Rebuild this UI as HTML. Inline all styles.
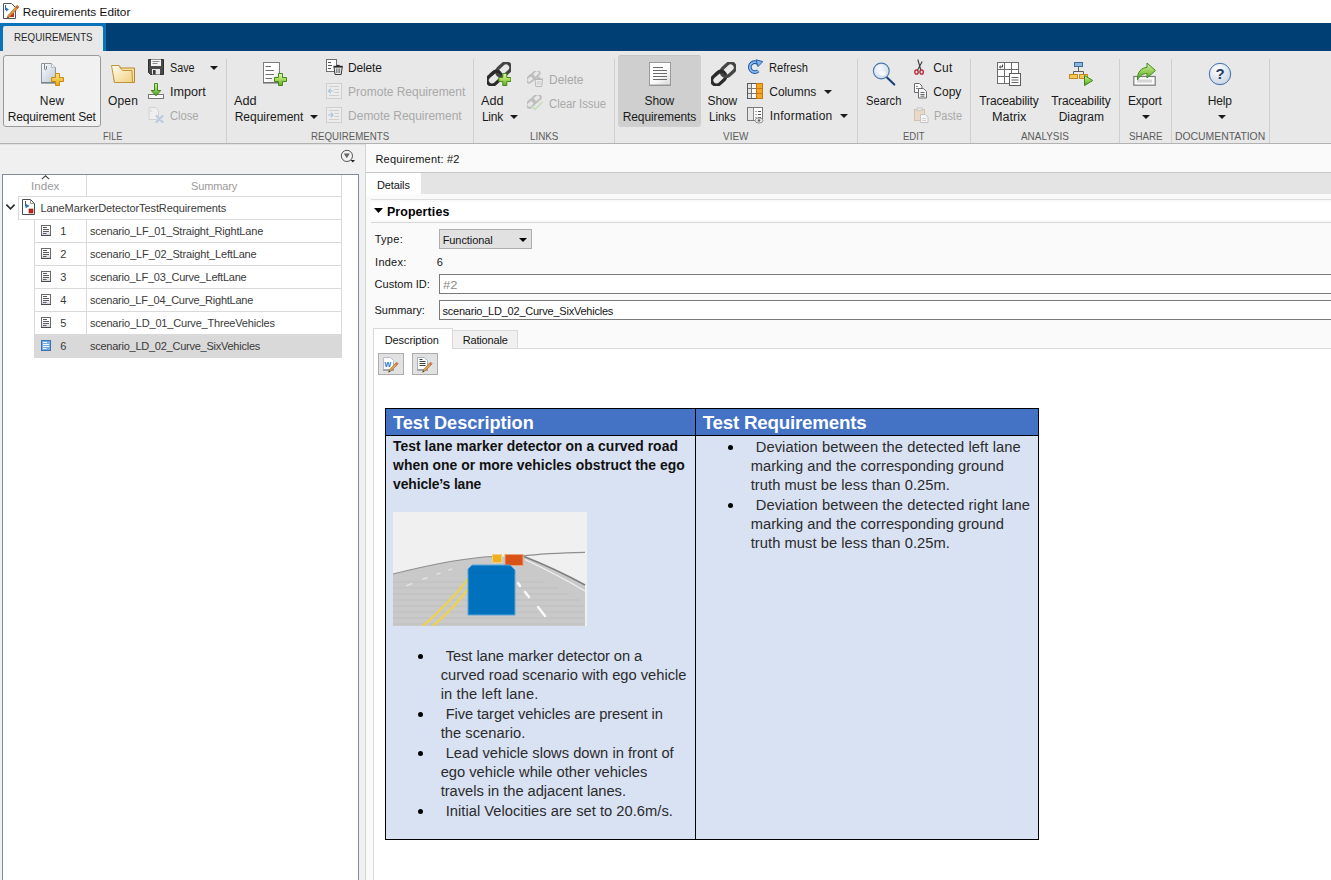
<!DOCTYPE html>
<html lang="en"><head><meta charset="utf-8"><title>Requirements Editor</title>
<style>
html,body{margin:0;padding:0}
body{width:1331px;height:880px;overflow:hidden;position:relative;background:#f0f0f0;font-family:'Liberation Sans', sans-serif;}
.b{position:absolute;box-sizing:border-box;display:block}
.t{position:absolute;white-space:pre;line-height:20px;transform-origin:0 50%;font-family:'Liberation Sans', sans-serif;}
</style></head>
<body>
<div class="b" style="left:0px;top:0px;width:1331px;height:23px;background:#ffffff;"></div>
<div class="b" style="left:0px;top:23px;width:1331px;height:28px;background:#003f73;"></div>
<div class="b" style="left:0px;top:23px;width:106px;height:28px;background:#0a72bb;"></div>
<div class="b" style="left:3px;top:26px;width:100px;height:25px;background:#e8e8e8;border-radius:2px 2px 0 0;"></div>
<div class="b" style="left:0px;top:51px;width:1331px;height:92px;background:#e8e8e8;"></div>
<div class="b" style="left:0px;top:143px;width:1331px;height:1px;background:#b2b2b2;"></div>
<div class="b" style="left:0px;top:144px;width:1331px;height:1px;background:#e0e0e0;"></div>
<div class="b" style="left:226px;top:59px;width:1px;height:84px;background:#cfcfcf;"></div>
<div class="b" style="left:473px;top:59px;width:1px;height:84px;background:#cfcfcf;"></div>
<div class="b" style="left:614px;top:59px;width:1px;height:84px;background:#cfcfcf;"></div>
<div class="b" style="left:857px;top:59px;width:1px;height:84px;background:#cfcfcf;"></div>
<div class="b" style="left:970px;top:59px;width:1px;height:84px;background:#cfcfcf;"></div>
<div class="b" style="left:1119px;top:59px;width:1px;height:84px;background:#cfcfcf;"></div>
<div class="b" style="left:1171px;top:59px;width:1px;height:84px;background:#cfcfcf;"></div>
<div class="b" style="left:1269px;top:59px;width:1px;height:84px;background:#cfcfcf;"></div>
<div class="b" style="left:3px;top:55px;width:98px;height:72px;background:#f1f1f1;border:1px solid #9a9a9a;border-radius:3px;"></div>
<div class="b" style="left:618px;top:55px;width:83px;height:72px;background:#cfcfcf;border-radius:3px;border-top:1px solid #c4c4c4;"></div>
<div class="b" style="left:0px;top:145px;width:365px;height:735px;background:#f0f0f0;"></div>
<div class="b" style="left:2px;top:174px;width:357px;height:720px;background:#ffffff;border:1px solid #828b99;"></div>
<div class="b" style="left:18px;top:196px;width:324px;height:1px;background:#dadada;"></div>
<div class="b" style="left:18px;top:219px;width:324px;height:1px;background:#dadada;"></div>
<div class="b" style="left:34px;top:242px;width:308px;height:1px;background:#dadada;"></div>
<div class="b" style="left:34px;top:265px;width:308px;height:1px;background:#dadada;"></div>
<div class="b" style="left:34px;top:288px;width:308px;height:1px;background:#dadada;"></div>
<div class="b" style="left:34px;top:311px;width:308px;height:1px;background:#dadada;"></div>
<div class="b" style="left:34px;top:334px;width:308px;height:1px;background:#dadada;"></div>
<div class="b" style="left:86px;top:175px;width:1px;height:21px;background:#dadada;"></div>
<div class="b" style="left:86px;top:220px;width:1px;height:114px;background:#dadada;"></div>
<div class="b" style="left:341px;top:175px;width:1px;height:159px;background:#dadada;"></div>
<div class="b" style="left:18px;top:197px;width:1px;height:22px;background:#dadada;"></div>
<div class="b" style="left:34px;top:220px;width:1px;height:114px;background:#dadada;"></div>
<div class="b" style="left:34px;top:334px;width:308px;height:24px;background:#d9d9d9;"></div>
<div class="b" style="left:365px;top:144px;width:966px;height:736px;background:#fafafa;"></div>
<div class="b" style="left:365px;top:144px;width:1px;height:736px;background:#d4d4d4;"></div>
<div class="b" style="left:366px;top:172px;width:965px;height:1px;background:#c6c6c6;"></div>
<div class="b" style="left:366px;top:173px;width:965px;height:21px;background:#e4e4e4;"></div>
<div class="b" style="left:366px;top:173px;width:55px;height:22px;background:#ffffff;"></div>
<div class="b" style="left:371px;top:199px;width:960px;height:1px;background:#dcdcdc;"></div>
<div class="b" style="left:371px;top:202px;width:960px;height:18px;background:#ffffff;"></div>
<div class="b" style="left:371px;top:222px;width:960px;height:1px;background:#d6d6d6;"></div>
<div class="b" style="left:439px;top:229px;width:93px;height:20px;background:#e1e1e1;border:1px solid #adadad;"></div>
<div class="b" style="left:439px;top:274px;width:900px;height:20px;background:#ffffff;border:1px solid #7a7a7a;"></div>
<div class="b" style="left:439px;top:300px;width:900px;height:20px;background:#ffffff;border:1px solid #7a7a7a;"></div>
<div class="b" style="left:373px;top:348px;width:960px;height:540px;background:#ffffff;border:1px solid #d9d9d9;"></div>
<div class="b" style="left:452px;top:330px;width:66px;height:19px;background:#f0f0f0;border:1px solid #d9d9d9;"></div>
<div class="b" style="left:373px;top:328px;width:80px;height:21px;background:#ffffff;border:1px solid #d9d9d9;border-bottom:none;"></div>
<div class="b" style="left:378px;top:353px;width:26px;height:22px;background:#e1e1e1;border:1px solid #adadad;"></div>
<div class="b" style="left:412px;top:353px;width:26px;height:22px;background:#e1e1e1;border:1px solid #adadad;"></div>
<div class="b" style="left:385px;top:408px;width:654px;height:432px;background:#d9e2f3;border:1px solid #000;"></div>
<div class="b" style="left:386px;top:409px;width:652px;height:26px;background:#4472c4;"></div>
<div class="b" style="left:386px;top:435px;width:652px;height:1px;background:#000;"></div>
<div class="b" style="left:695px;top:409px;width:1px;height:430px;background:#000;"></div>
<svg class="b" width="0" height="0" style="left:0;top:0"><defs>
<linearGradient id="gDoc" x1="0" y1="0" x2="1" y2="1"><stop offset="0" stop-color="#fdfdfe"/><stop offset="1" stop-color="#b9c6d6"/></linearGradient>
<linearGradient id="gPaper" x1="0" y1="0" x2="1" y2="1"><stop offset="0.5" stop-color="#ffffff"/><stop offset="1" stop-color="#d8d8d8"/></linearGradient>
<linearGradient id="gPlusY" x1="0" y1="0" x2="0" y2="1"><stop offset="0" stop-color="#ffe680"/><stop offset="1" stop-color="#e9a60d"/></linearGradient>
<linearGradient id="gPlusG" x1="0" y1="0" x2="0" y2="1"><stop offset="0" stop-color="#e6f6b4"/><stop offset="0.5" stop-color="#a9d85a"/><stop offset="1" stop-color="#62ab22"/></linearGradient>
<linearGradient id="gFold" x1="0" y1="0" x2="1" y2="1"><stop offset="0" stop-color="#fffdf2"/><stop offset="1" stop-color="#f1cf7c"/></linearGradient>
<linearGradient id="gGreen" x1="0" y1="0" x2="0" y2="1"><stop offset="0" stop-color="#d3eea2"/><stop offset="0.55" stop-color="#8fcb4e"/><stop offset="1" stop-color="#429c1d"/></linearGradient>
<linearGradient id="gBlue" x1="0" y1="0" x2="0" y2="1"><stop offset="0" stop-color="#8fc0ee"/><stop offset="1" stop-color="#1d5fb0"/></linearGradient>
<radialGradient id="gHelp" cx="0.4" cy="0.3" r="0.8"><stop offset="0" stop-color="#ffffff"/><stop offset="1" stop-color="#c3cfdf"/></radialGradient>
<radialGradient id="gLens" cx="0.4" cy="0.35" r="0.8"><stop offset="0" stop-color="#f6f9fc"/><stop offset="1" stop-color="#c8d6e6"/></radialGradient>
<linearGradient id="gRow" x1="0" y1="0" x2="0" y2="1"><stop offset="0.4" stop-color="#ffffff"/><stop offset="1" stop-color="#cfd6de"/></linearGradient>
</defs></svg>
<svg class="b" style="left:2px;top:2px" width="18" height="18" viewBox="0 0 18 18"><path d="M1.5 1.5H9.5L13.5 5.5V16.5H1.5Z" fill="#fff" stroke="#555" stroke-width="1"/>
<path d="M3.5 3V8" stroke="#1f66b5" stroke-width="1"/><path d="M4 5.5L7 7.5L4 9.5Z" fill="#2a7ad0"/>
<rect x="8" y="11" width="4" height="4" fill="#c8321e"/>
<path d="M15.2 3.2L17 5L7.5 15L5.2 16.2L6 13.5Z" fill="#e79a3c" stroke="#8a5a20" stroke-width="0.6"/>
<path d="M14 4.4L15.8 6.2" stroke="#c0504d" stroke-width="1.4"/><path d="M5.2 16.2L6 14.6L6.9 15.5Z" fill="#222"/></svg>
<svg class="b" style="left:40px;top:62px" width="24" height="24" viewBox="0 0 24 24"><path d="M1.5 1.5H11.5L15.5 5.5V20.5H1.5Z" fill="url(#gDoc)" stroke="#8c949e" stroke-width="1"/>
<path d="M1 21H16" stroke="#6f7781" stroke-width="1.2"/>
<path d="M11.5 1.5V5.5H15.5" fill="#eef2f6" stroke="#a9b1bb" stroke-width="0.8"/>
<path d="M4.5 2V7.2Q5.5 8.4 6.5 7.2V4" fill="none" stroke="#7a828c" stroke-width="1"/><path d="M15.5 11.5H19.5V15.5H23.5V19.5H19.5V23.5H15.5V19.5H11.5V15.5H15.5Z" fill="url(#gPlusY)" stroke="#c98a12" stroke-width="1" stroke-linejoin="round"/></svg>
<svg class="b" style="left:110px;top:62px" width="26" height="24" viewBox="0 0 26 24"><path d="M2.5 3.5H9L11 6H24.5V20.5H4.5Z" fill="#f7e3a6" stroke="#b8862c" stroke-width="1"/>
<path d="M1.5 3.5L4.5 20.5H22.5L22 8.5H12.5L10.5 6.2L9 3.5Z" fill="url(#gFold)" stroke="#c39436" stroke-width="1" stroke-linejoin="round"/></svg>
<svg class="b" style="left:148px;top:59px" width="16" height="16" viewBox="0 0 16 16"><path d="M1 0.5H15.5V15.5H2.5L0.5 13.5V0.5Z" fill="#4a4a4a" stroke="#2e2e2e" stroke-width="1"/>
<rect x="3" y="0.5" width="10" height="6.5" fill="#f4f4f4"/><path d="M4.5 2.5H11.5M4.5 4.5H9.5" stroke="#8a8a8a" stroke-width="1"/>
<rect x="4" y="10" width="8" height="5.5" fill="#e9e9e9"/><rect x="5" y="11" width="2.6" height="4.5" fill="#3a3a3a"/></svg>
<svg class="b" style="left:148px;top:83px" width="16" height="16" viewBox="0 0 16 16"><rect x="0.5" y="11.5" width="15" height="4" fill="#fafafa" stroke="#777" stroke-width="1"/>
<path d="M6.5 0.5H9.5V7.5H12.8L8 12.8L3.2 7.5H6.5Z" fill="url(#gGreen)" stroke="#2f7d12" stroke-width="0.9" stroke-linejoin="round"/></svg>
<svg class="b" style="left:148px;top:107px" width="16" height="16" viewBox="0 0 16 16"><path d="M1 0.5H7.5L10.5 3.5V12.5H1Z" fill="#efefef" stroke="#d2d2d2" stroke-width="1"/>
<path d="M3 2.5V5" stroke="#d0d0d0" stroke-width="1"/>
<path d="M8.5 9L14.5 15M14.5 9L8.5 15" stroke="#bccbe0" stroke-width="2.3" stroke-linecap="round"/></svg>
<svg class="b" style="left:263px;top:62px" width="24" height="24" viewBox="0 0 24 24"><rect x="0.5" y="0.5" width="16" height="20" fill="url(#gPaper)" stroke="#7d7d7d" stroke-width="1"/>
<path d="M0 21H17" stroke="#6a6a6a" stroke-width="1"/>
<path d="M2.5 4.5H8M2.5 8.5H11M2.5 12.5H11M2.5 16.5H9" stroke="#6f6f6f" stroke-width="1"/><path d="M15.5 11.5H19.5V15.5H23.5V19.5H19.5V23.5H15.5V19.5H11.5V15.5H15.5Z" fill="url(#gPlusG)" stroke="#3f8a1a" stroke-width="1" stroke-linejoin="round"/></svg>
<svg class="b" style="left:326px;top:59px" width="17" height="17" viewBox="0 0 17 17"><rect x="0.5" y="0.5" width="10" height="12" fill="#fff" stroke="#6e6e6e" stroke-width="1"/>
<path d="M2 3.5H5M2 6.5H6M2 9.5H5" stroke="#555" stroke-width="1"/>
<path d="M8 8H16.2L15.2 15.5H9Z" fill="#e8e8e8" stroke="#3a3a3a" stroke-width="1" stroke-linejoin="round"/>
<path d="M7.4 7.5H16.8" stroke="#2c2c2c" stroke-width="1.4"/><path d="M10.5 6.5H13.7" stroke="#2c2c2c" stroke-width="1.2"/>
<path d="M10.6 9.5V14M12.1 9.5V14M13.6 9.5V14" stroke="#555" stroke-width="0.7"/></svg>
<svg class="b" style="left:326px;top:83px" width="16" height="16" viewBox="0 0 16 16"><rect x="0.5" y="0.5" width="15" height="15" fill="#ececec" stroke="#cfcfcf" stroke-width="1"/>
<path d="M3 3.5H13M8.5 6.5H13M8.5 9.5H13M3 12.5H13" stroke="#cfcfcf" stroke-width="1"/>
<path d="M7.5 8H2.5M4.8 5.7L2.5 8L4.8 10.3" fill="none" stroke="#a7c0d8" stroke-width="1.1"/></svg>
<svg class="b" style="left:326px;top:107px" width="16" height="16" viewBox="0 0 16 16"><rect x="0.5" y="0.5" width="15" height="15" fill="#ececec" stroke="#cfcfcf" stroke-width="1"/>
<path d="M3 3.5H13M8.5 6.5H13M8.5 9.5H13M3 12.5H13" stroke="#cfcfcf" stroke-width="1"/>
<path d="M2 8H7M4.7 5.7L7 8L4.7 10.3" fill="none" stroke="#a7c0d8" stroke-width="1.1"/></svg>
<svg class="b" style="left:487px;top:62px" width="24" height="24" viewBox="0 0 24 24"><g fill="none" transform="rotate(-42 12 12)"><rect x="-2.2" y="7.2" width="15.6" height="9.6" rx="4.8" stroke="#2b2b2b" stroke-width="3.3"/><rect x="10.6" y="7.2" width="15.6" height="9.6" rx="4.8" stroke="#454545" stroke-width="3.3"/><path d="M5 7.2H9.4A4 4 0 0 1 13.4 11" stroke="#2b2b2b" stroke-width="3.3"/></g><path d="M15.8 11.5H19.8V15.5H23.8V19.5H19.8V23.5H15.8V19.5H11.8V15.5H15.8Z" fill="url(#gPlusG)" stroke="#3f8a1a" stroke-width="1" stroke-linejoin="round"/></svg>
<svg class="b" style="left:711px;top:62px" width="25" height="24" viewBox="0 0 24 24"><g fill="none" transform="rotate(-42 12 12)"><rect x="-2.2" y="7.2" width="15.6" height="9.6" rx="4.8" stroke="#2b2b2b" stroke-width="3.3"/><rect x="10.6" y="7.2" width="15.6" height="9.6" rx="4.8" stroke="#454545" stroke-width="3.3"/><path d="M5 7.2H9.4A4 4 0 0 1 13.4 11" stroke="#2b2b2b" stroke-width="3.3"/></g></svg>
<svg class="b" style="left:527px;top:71px" width="16" height="16" viewBox="0 0 16 16"><g opacity="0.55" transform="scale(0.55) translate(-1,-2)"><g fill="none" transform="rotate(-42 12 12)"><rect x="-2.2" y="7.2" width="15.6" height="9.6" rx="4.8" stroke="#9a9a9a" stroke-width="3.2"/><rect x="10.6" y="7.2" width="15.6" height="9.6" rx="4.8" stroke="#9a9a9a" stroke-width="3.2"/><path d="M5 7.2H9.4A4 4 0 0 1 13.4 11" stroke="#9a9a9a" stroke-width="3.2"/></g></g><path d="M8 8.5H15.5L14.7 15.5H8.8Z" fill="#ececec" stroke="#b9b9b9" stroke-width="1"/><path d="M7.3 8H16M10 6.8H13.4" stroke="#b4b4b4" stroke-width="1.1"/>
<path d="M10.3 10V14M11.8 10V14M13.3 10V14" stroke="#c4c4c4" stroke-width="0.7"/></svg>
<svg class="b" style="left:527px;top:95px" width="16" height="16" viewBox="0 0 16 16"><g opacity="0.55" transform="scale(0.6) translate(-1,-2)"><g fill="none" transform="rotate(-42 12 12)"><rect x="-2.2" y="7.2" width="15.6" height="9.6" rx="4.8" stroke="#9a9a9a" stroke-width="3.2"/><rect x="10.6" y="7.2" width="15.6" height="9.6" rx="4.8" stroke="#9a9a9a" stroke-width="3.2"/><path d="M5 7.2H9.4A4 4 0 0 1 13.4 11" stroke="#9a9a9a" stroke-width="3.2"/></g></g><path d="M4.5 11L8 14.5L15.5 7" fill="none" stroke="#c9dfc0" stroke-width="1.8"/></svg>
<svg class="b" style="left:649px;top:62px" width="22" height="24" viewBox="0 0 22 24"><rect x="0.5" y="0.5" width="21" height="22.5" fill="url(#gPaper)" stroke="#9b9b9b" stroke-width="1"/>
<path d="M0 23.6H22" stroke="#8a8a8a" stroke-width="0.8"/>
<path d="M4 5.5H14M4 8.5H18M4 11.5H18M4 14.5H18M4 17.5H18" stroke="#6b6b6b" stroke-width="1"/></svg>
<svg class="b" style="left:747px;top:59px" width="16" height="16" viewBox="0 0 16 16"><path d="M11.2 11.8A5 5 0 1 1 11.8 5.2" fill="none" stroke="#1b56a4" stroke-width="3.6"/>
<path d="M11.2 11.8A5 5 0 1 1 11.8 5.2" fill="none" stroke="#86b7e8" stroke-width="1.8"/>
<path d="M9 0.8L15.8 2.6L11 7.6Z" fill="#7fb2e6" stroke="#1b56a4" stroke-width="0.9" stroke-linejoin="round"/></svg>
<svg class="b" style="left:747px;top:83px" width="16" height="16" viewBox="0 0 16 16"><rect x="0.5" y="0.5" width="15" height="15" fill="#fff" stroke="#5a5a5a" stroke-width="1"/>
<rect x="10" y="1" width="5.5" height="14" fill="#f5a623"/><rect x="1" y="1" width="3" height="14" fill="#e3e3e3"/>
<path d="M4.5 1V15M9.5 1V15M1 5.5H15M1 10.5H15" stroke="#777" stroke-width="1"/>
<path d="M10 5.5H15.5M10 10.5H15.5" stroke="#c7780c" stroke-width="1"/><rect x="9.5" y="0.5" width="6" height="15" fill="none" stroke="#c7780c" stroke-width="1"/></svg>
<svg class="b" style="left:747px;top:107px" width="17" height="17" viewBox="0 0 17 17"><rect x="0.5" y="0.5" width="15" height="13" fill="#fdfdfd" stroke="#7a7a7a" stroke-width="1"/>
<rect x="1" y="1" width="5" height="12" fill="#e6e6e6"/><path d="M6.5 1V13.5" stroke="#8a8a8a" stroke-width="1"/>
<path d="M8.5 4.5H9.5M11 4.5H14M8.5 7.5H9.5M11 7.5H14M8.5 10.5H9.5M11 10.5H14" stroke="#555" stroke-width="1"/>
<ellipse cx="12" cy="13.5" rx="4" ry="2.6" fill="#e6e6e6" stroke="#8a8a8a" stroke-width="0.9"/><circle cx="12" cy="13.5" r="1.2" fill="#666"/></svg>
<svg class="b" style="left:871px;top:61px" width="26" height="26" viewBox="0 0 26 26"><path d="M16 16.5L23.3 23.6" stroke="#17407a" stroke-width="2.1" stroke-linecap="round"/>
<circle cx="10.3" cy="10" r="7.9" fill="url(#gLens)" stroke="#4a77ad" stroke-width="1.15"/>
<ellipse cx="11.5" cy="12.5" rx="3.2" ry="2.2" fill="#fff" opacity="0.8"/></svg>
<svg class="b" style="left:913px;top:59px" width="13" height="16" viewBox="0 0 13 16"><path d="M4.8 0.5L7.8 11M9.2 2.5L4.6 11" stroke="#3a3a3a" stroke-width="1.1" fill="none"/>
<ellipse cx="3.5" cy="13" rx="1.7" ry="2.2" fill="none" stroke="#b3202a" stroke-width="1.3"/>
<ellipse cx="8.6" cy="13" rx="1.7" ry="2.2" fill="none" stroke="#b3202a" stroke-width="1.3"/></svg>
<svg class="b" style="left:914px;top:83px" width="14" height="16" viewBox="0 0 14 16"><path d="M0.5 0.5H5.5L8 3V9.5H0.5Z" fill="#fff" stroke="#6c6c6c" stroke-width="1"/><path d="M2 3.5H4M2 5.5H6" stroke="#888" stroke-width="1"/>
<path d="M4.5 5.5H9.5L12.5 8.5V15H4.5Z" fill="#f4f6f9" stroke="#6c6c6c" stroke-width="1"/><path d="M6.5 9.5H10.5M6.5 11.5H10.5M6.5 13.2H10.5" stroke="#666" stroke-width="1"/></svg>
<svg class="b" style="left:914px;top:107px" width="15" height="16" viewBox="0 0 15 16"><rect x="0.5" y="2.5" width="10" height="11" fill="#ead9c4" stroke="#d2c2ad" stroke-width="1"/>
<rect x="3" y="0.8" width="5" height="3" fill="#e3e3e3" stroke="#c6c6c6" stroke-width="0.8"/>
<path d="M6.5 7.5H11.5L14 10V15.5H6.5Z" fill="#f5f5f5" stroke="#c4c4c4" stroke-width="1"/><path d="M8.3 11.5H12M8.3 13.5H12" stroke="#cfcfcf" stroke-width="1"/></svg>
<svg class="b" style="left:997px;top:62px" width="24" height="24" viewBox="0 0 24 24"><rect x="0.5" y="0.5" width="21" height="21" fill="#fff" stroke="#6d6d6d" stroke-width="1"/>
<path d="M7.5 0.5V21.5M14.5 0.5V21.5M0.5 7.5H21.5M0.5 14.5H21.5" stroke="#6d6d6d" stroke-width="1"/>
<path d="M5.5 2.5V5H2.5M3.8 3.8L2.5 5L3.8 6.2" fill="none" stroke="#333" stroke-width="0.9"/>
<rect x="12.5" y="11.5" width="11" height="12" fill="#fff" stroke="#5c5c5c" stroke-width="1"/>
<path d="M14.5 15.5H21.5M14.5 18H21.5M14.5 20.5H21.5" stroke="#666" stroke-width="1"/></svg>
<svg class="b" style="left:1069px;top:62px" width="25" height="24" viewBox="0 0 25 24"><path d="M9.5 5V9.5M4.5 12V9.5H14.5V12" fill="none" stroke="#5c5c5c" stroke-width="1"/>
<rect x="5.5" y="0.5" width="8" height="4" fill="#8db4dc" stroke="#3e6a9a" stroke-width="1"/>
<rect x="0.5" y="12.5" width="8" height="4" fill="#f6c65a" stroke="#c08a1c" stroke-width="1"/>
<rect x="10.5" y="12.5" width="8" height="4" fill="#f6c65a" stroke="#c08a1c" stroke-width="1"/>
<path d="M15.5 13.5L23.8 18.5L15.5 23.5Z" fill="url(#gGreen)" stroke="#3a8a18" stroke-width="1" stroke-linejoin="round"/></svg>
<svg class="b" style="left:1133px;top:62px" width="24" height="24" viewBox="0 0 24 24"><rect x="0.8" y="14.5" width="21.4" height="8.7" fill="#fbfbfb" stroke="#7c7c7c" stroke-width="1.2"/>
<rect x="4" y="17.5" width="15" height="3" fill="#d4d4d4"/>
<path d="M4.5 18C4 10 8.5 5.5 14 5.5V1L22.5 8.5L14 16V11.5C10.5 11.5 7 13 4.5 18Z" fill="url(#gGreen)" stroke="#3f8f20" stroke-width="1" stroke-linejoin="round"/></svg>
<svg class="b" style="left:1208px;top:62px" width="24" height="24" viewBox="0 0 24 24"><circle cx="12" cy="12" r="10.7" fill="url(#gHelp)" stroke="#3f6ea9" stroke-width="1"/>
<text x="12" y="17.2" text-anchor="middle" font-family="'Liberation Sans',sans-serif" font-weight="700" font-size="15" fill="#1f3a66">?</text></svg>
<svg class="b" style="left:340px;top:149px" width="16" height="15" viewBox="0 0 16 15"><circle cx="6.9" cy="6.9" r="5.6" fill="#f2f2f2" stroke="#555" stroke-width="1"/>
<path d="M3.8 4.6H9.8L6.8 9.2Z" fill="#666"/><path d="M10.5 11H15L12.8 13.6Z" fill="#222"/></svg>
<svg class="b" style="left:41px;top:175px" width="9" height="5" viewBox="0 0 9 5"><path d="M0.8 4.2L4.5 0.8L8.2 4.2" fill="none" stroke="#444" stroke-width="1.1"/></svg>
<svg class="b" style="left:5px;top:203px" width="11" height="8" viewBox="0 0 11 8"><path d="M1.4 1.6L5.5 5.8L9.6 1.6" fill="none" stroke="#2e2e2e" stroke-width="1.7"/></svg>
<svg class="b" style="left:22px;top:199px" width="14" height="16" viewBox="0 0 14 16"><path d="M0.5 0.5H8.5L12.5 4.5V15.5H0.5Z" fill="#fff" stroke="#4a4a4a" stroke-width="1"/>
<path d="M8.5 0.5V4.5H12.5" fill="none" stroke="#7a7a7a" stroke-width="0.8"/>
<path d="M3.5 2V7" stroke="#555" stroke-width="1"/><path d="M3.5 4.8L7.5 7L3.5 9.2Z" fill="#1f6fc4"/>
<rect x="7" y="10" width="4" height="4" fill="#c3201a" stroke="#8f1611" stroke-width="0.6"/></svg>
<svg class="b" style="left:41px;top:225px" width="10" height="11" viewBox="0 0 10 11"><rect x="0.5" y="0.5" width="9" height="10" fill="url(#gRow)" stroke="#6a6a6a" stroke-width="1"/>
<path d="M0 10.5H10" stroke="#4a4a4a" stroke-width="1"/>
<path d="M2 2.5H6M2 4.5H8M2 6.5H8M2 8.5H5.5" stroke="#5c5c5c" stroke-width="1"/></svg>
<svg class="b" style="left:41px;top:248px" width="10" height="11" viewBox="0 0 10 11"><rect x="0.5" y="0.5" width="9" height="10" fill="url(#gRow)" stroke="#6a6a6a" stroke-width="1"/>
<path d="M0 10.5H10" stroke="#4a4a4a" stroke-width="1"/>
<path d="M2 2.5H6M2 4.5H8M2 6.5H8M2 8.5H5.5" stroke="#5c5c5c" stroke-width="1"/></svg>
<svg class="b" style="left:41px;top:271px" width="10" height="11" viewBox="0 0 10 11"><rect x="0.5" y="0.5" width="9" height="10" fill="url(#gRow)" stroke="#6a6a6a" stroke-width="1"/>
<path d="M0 10.5H10" stroke="#4a4a4a" stroke-width="1"/>
<path d="M2 2.5H6M2 4.5H8M2 6.5H8M2 8.5H5.5" stroke="#5c5c5c" stroke-width="1"/></svg>
<svg class="b" style="left:41px;top:294px" width="10" height="11" viewBox="0 0 10 11"><rect x="0.5" y="0.5" width="9" height="10" fill="url(#gRow)" stroke="#6a6a6a" stroke-width="1"/>
<path d="M0 10.5H10" stroke="#4a4a4a" stroke-width="1"/>
<path d="M2 2.5H6M2 4.5H8M2 6.5H8M2 8.5H5.5" stroke="#5c5c5c" stroke-width="1"/></svg>
<svg class="b" style="left:41px;top:317px" width="10" height="11" viewBox="0 0 10 11"><rect x="0.5" y="0.5" width="9" height="10" fill="url(#gRow)" stroke="#6a6a6a" stroke-width="1"/>
<path d="M0 10.5H10" stroke="#4a4a4a" stroke-width="1"/>
<path d="M2 2.5H6M2 4.5H8M2 6.5H8M2 8.5H5.5" stroke="#5c5c5c" stroke-width="1"/></svg>
<svg class="b" style="left:41px;top:340px" width="10" height="11" viewBox="0 0 10 11"><rect x="0.5" y="0.5" width="9" height="10" fill="#79ace3" stroke="#3a73b8" stroke-width="1"/>
<path d="M2 2.5H6M2 4.5H8M2 6.5H8M2 8.5H5.5" stroke="#f2f7fd" stroke-width="1"/></svg>
<svg class="b" style="left:381px;top:355px" width="20" height="20" viewBox="0 0 20 20"><path d="M2.5 2.5H9.5L12.5 5.5V14.5H2.5Z" fill="#fdfdfe" stroke="#b3bcc8" stroke-width="1"/>
<path d="M2 15.2H13" stroke="#7d8794" stroke-width="1"/>
<text x="3.6" y="12" font-family="'Liberation Sans',sans-serif" font-weight="700" font-size="8.5" fill="#2b7cd3">w</text><path d="M15.6 7.2L17.2 8.8L10 16L7.6 17.2L8.6 14.6Z" fill="#e9a24a" stroke="#8e5d22" stroke-width="0.6"/>
<path d="M14.6 8.2L16.2 9.8" stroke="#d36a6a" stroke-width="1.4"/><path d="M7.6 17.2L8.3 15.7L9.2 16.6Z" fill="#1e1e1e"/></svg>
<svg class="b" style="left:415px;top:355px" width="20" height="20" viewBox="0 0 20 20"><path d="M2.5 2.5H9.5L12.5 5.5V14.5H2.5Z" fill="#fdfdfe" stroke="#a9b1bb" stroke-width="1"/>
<path d="M2 15.2H13" stroke="#7d8794" stroke-width="1"/>
<path d="M4.5 4.5H7.5M4.5 6.5H10.5M4.5 8.5H10.5M4.5 10.5H10.5" stroke="#3e3e3e" stroke-width="1"/><path d="M15.6 7.2L17.2 8.8L10 16L7.6 17.2L8.6 14.6Z" fill="#e9a24a" stroke="#8e5d22" stroke-width="0.6"/>
<path d="M14.6 8.2L16.2 9.8" stroke="#d36a6a" stroke-width="1.4"/><path d="M7.6 17.2L8.3 15.7L9.2 16.6Z" fill="#1e1e1e"/></svg>
<svg class="b" style="left:393px;top:512px" width="194" height="114" viewBox="0 0 194 114"><rect width="194" height="114" fill="#f0f0f0"/>
<path d="M0 62 C40 52 75 45.5 100 44.5 L131 44.5 C150 52 172 62 192 73 L192 114 L0 114 Z" fill="#c9c9c9"/>
<g stroke="#bdbdbd" stroke-width="1" opacity="0.8"><path d="M0 70H150M0 76H165M0 82H176M0 88H186M0 94H192M0 100H192M0 106H192M0 112H192"/></g>
<path d="M0 62 C40 52 75 45.5 100 44.5" fill="none" stroke="#8c8c8c" stroke-width="1.2"/>
<path d="M131 44.5 C150 52 172 62 192 73" fill="none" stroke="#7e7e7e" stroke-width="1.6"/>
<path d="M132 47.5 C150 56 172 67 192 79" fill="none" stroke="#f2f2f2" stroke-width="1.2"/>
<path d="M128 44.2 C150 41.5 172 40.8 192 40.4" fill="none" stroke="#8f8f8f" stroke-width="1.4"/>
<path d="M30 114 C48 98 62 84 76 66 M40 114 C56 100 68 88 80 70" fill="none" stroke="#ead25a" stroke-width="2.6"/>
<g stroke="#e2e2e2" stroke-width="1.6" stroke-linecap="round"><path d="M14 73.5L19 71.8M30 67L34 65.8M44 62L47 61.2M56 58L58.5 57.3"/></g>
<g stroke="#fafafa" stroke-width="2.4" stroke-linecap="round"><path d="M145 95L152 104M132 80L136 85M125 71L127 74"/></g>
<rect x="99.5" y="42.5" width="9" height="8" fill="#edb120" stroke="#f3cf7a" stroke-width="1"/>
<rect x="112" y="42.5" width="18" height="11" fill="#d95319" stroke="#e9a37f" stroke-width="1"/>
<path d="M79 53L117 53L122 58L122 103L75 103L75 57Z" fill="#0072bd" stroke="#5aa6dc" stroke-width="1"/>
<path d="M75 61H122" stroke="#0a68aa" stroke-width="1" opacity="0.7"/></svg>
<svg class="b" style="left:210px;top:66px" width="8" height="4" viewBox="0 0 8 4"><path d="M0 0H8L4.0 4Z" fill="#1a1a1a"/></svg>
<svg class="b" style="left:309.5px;top:115px" width="8" height="4" viewBox="0 0 8 4"><path d="M0 0H8L4.0 4Z" fill="#1a1a1a"/></svg>
<svg class="b" style="left:509.5px;top:115px" width="8" height="4" viewBox="0 0 8 4"><path d="M0 0H8L4.0 4Z" fill="#1a1a1a"/></svg>
<svg class="b" style="left:824px;top:90px" width="8" height="4" viewBox="0 0 8 4"><path d="M0 0H8L4.0 4Z" fill="#1a1a1a"/></svg>
<svg class="b" style="left:840px;top:114px" width="8" height="4" viewBox="0 0 8 4"><path d="M0 0H8L4.0 4Z" fill="#1a1a1a"/></svg>
<svg class="b" style="left:1142px;top:114.5px" width="8" height="4" viewBox="0 0 8 4"><path d="M0 0H8L4.0 4Z" fill="#1a1a1a"/></svg>
<svg class="b" style="left:1217.5px;top:115px" width="8" height="4" viewBox="0 0 8 4"><path d="M0 0H8L4.0 4Z" fill="#1a1a1a"/></svg>
<svg class="b" style="left:373.8px;top:208px" width="9" height="5" viewBox="0 0 9 5"><path d="M0 0H9L4.5 5Z" fill="#000"/></svg>
<svg class="b" style="left:518.5px;top:237.5px" width="8" height="4" viewBox="0 0 8 4"><path d="M0 0H8L4.0 4Z" fill="#000"/></svg>
<div class="b" style="left:417.5px;top:653.7px;width:5.8px;height:5.8px;background:#000;border-radius:50%;"></div>
<div class="b" style="left:417.5px;top:711.7px;width:5.8px;height:5.8px;background:#000;border-radius:50%;"></div>
<div class="b" style="left:417.5px;top:750.7px;width:5.8px;height:5.8px;background:#000;border-radius:50%;"></div>
<div class="b" style="left:417.5px;top:808.7px;width:5.8px;height:5.8px;background:#000;border-radius:50%;"></div>
<div class="b" style="left:727.5px;top:444.70000000000005px;width:5.8px;height:5.8px;background:#000;border-radius:50%;"></div>
<div class="b" style="left:727.5px;top:502.70000000000005px;width:5.8px;height:5.8px;background:#000;border-radius:50%;"></div>
<span class="t" style="left:22.80px;top:2px;font-size:11.8px;color:#111;">Requirements Editor</span>
<span class="t" style="left:13.70px;top:27px;font-size:11px;color:#2a2a2a;transform:scaleX(0.8869);">REQUIREMENTS</span>
<span class="t" style="left:39.70px;top:91px;font-size:12px;color:#1a1a1a;letter-spacing:0.292px;">New</span>
<span class="t" style="left:7.70px;top:107px;font-size:12px;color:#1a1a1a;letter-spacing:-0.132px;">Requirement Set</span>
<span class="t" style="left:107.90px;top:91px;font-size:12px;color:#1a1a1a;letter-spacing:0.214px;">Open</span>
<span class="t" style="left:169.70px;top:58px;font-size:12px;color:#1a1a1a;transform:scaleX(0.8991);">Save</span>
<span class="t" style="left:170.10px;top:82px;font-size:12px;color:#1a1a1a;transform:scaleX(1.0525);">Import</span>
<span class="t" style="left:169.70px;top:106px;font-size:12px;color:#a9a9a9;transform:scaleX(0.9320);">Close</span>
<span class="t" style="left:103.10px;top:126px;font-size:11px;color:#5c5c5c;transform:scaleX(0.8350);">FILE</span>
<span class="t" style="left:234.30px;top:91px;font-size:12px;color:#1a1a1a;transform:scaleX(1.0581);">Add</span>
<span class="t" style="left:234.70px;top:107px;font-size:12px;color:#1a1a1a;letter-spacing:-0.010px;">Requirement</span>
<span class="t" style="left:348.10px;top:58px;font-size:12px;color:#1a1a1a;letter-spacing:-0.177px;">Delete</span>
<span class="t" style="left:348.10px;top:82px;font-size:12px;color:#a9a9a9;letter-spacing:-0.011px;">Promote Requirement</span>
<span class="t" style="left:348.10px;top:106px;font-size:12px;color:#a9a9a9;letter-spacing:-0.027px;">Demote Requirement</span>
<span class="t" style="left:311.10px;top:126px;font-size:11px;color:#5c5c5c;transform:scaleX(0.8824);">REQUIREMENTS</span>
<span class="t" style="left:481.30px;top:91px;font-size:12px;color:#1a1a1a;transform:scaleX(1.0487);">Add</span>
<span class="t" style="left:481.90px;top:107px;font-size:12px;color:#1a1a1a;letter-spacing:-0.205px;">Link</span>
<span class="t" style="left:549.10px;top:70px;font-size:12px;color:#a9a9a9;letter-spacing:-0.057px;">Delete</span>
<span class="t" style="left:548.90px;top:94px;font-size:12px;color:#a9a9a9;transform:scaleX(0.9390);">Clear Issue</span>
<span class="t" style="left:529.90px;top:126px;font-size:11px;color:#5c5c5c;transform:scaleX(0.8932);">LINKS</span>
<span class="t" style="left:644.50px;top:91px;font-size:12px;color:#1a1a1a;letter-spacing:-0.077px;">Show</span>
<span class="t" style="left:622.70px;top:107px;font-size:12px;color:#1a1a1a;letter-spacing:-0.100px;">Requirements</span>
<span class="t" style="left:707.50px;top:91px;font-size:12px;color:#1a1a1a;letter-spacing:-0.077px;">Show</span>
<span class="t" style="left:709.10px;top:107px;font-size:12px;color:#1a1a1a;transform:scaleX(0.9566);">Links</span>
<span class="t" style="left:769.30px;top:58px;font-size:12px;color:#1a1a1a;transform:scaleX(0.9279);">Refresh</span>
<span class="t" style="left:769.30px;top:82px;font-size:12px;color:#1a1a1a;letter-spacing:-0.060px;">Columns</span>
<span class="t" style="left:769.70px;top:106px;font-size:12px;color:#1a1a1a;letter-spacing:0.257px;">Information</span>
<span class="t" style="left:723.30px;top:126px;font-size:11px;color:#5c5c5c;transform:scaleX(0.9031);">VIEW</span>
<span class="t" style="left:865.90px;top:91px;font-size:12px;color:#1a1a1a;transform:scaleX(0.9308);">Search</span>
<span class="t" style="left:933.30px;top:58px;font-size:12px;color:#1a1a1a;letter-spacing:0.156px;">Cut</span>
<span class="t" style="left:933.30px;top:82px;font-size:12px;color:#1a1a1a;letter-spacing:-0.005px;">Copy</span>
<span class="t" style="left:933.70px;top:106px;font-size:12px;color:#a9a9a9;transform:scaleX(0.9124);">Paste</span>
<span class="t" style="left:903.10px;top:126px;font-size:11px;color:#5c5c5c;transform:scaleX(0.8618);">EDIT</span>
<span class="t" style="left:979.30px;top:91px;font-size:12px;color:#1a1a1a;letter-spacing:-0.138px;">Traceability</span>
<span class="t" style="left:991.90px;top:107px;font-size:12px;color:#1a1a1a;transform:scaleX(1.0529);">Matrix</span>
<span class="t" style="left:1051.30px;top:91px;font-size:12px;color:#1a1a1a;letter-spacing:-0.138px;">Traceability</span>
<span class="t" style="left:1058.70px;top:107px;font-size:12px;color:#1a1a1a;letter-spacing:-0.027px;">Diagram</span>
<span class="t" style="left:1020.90px;top:126px;font-size:11px;color:#5c5c5c;transform:scaleX(0.9019);">ANALYSIS</span>
<span class="t" style="left:1127.90px;top:91px;font-size:12px;color:#1a1a1a;letter-spacing:-0.138px;">Export</span>
<span class="t" style="left:1128.70px;top:126px;font-size:11px;color:#5c5c5c;transform:scaleX(0.8864);">SHARE</span>
<span class="t" style="left:1207.70px;top:91px;font-size:12px;color:#1a1a1a;letter-spacing:-0.163px;">Help</span>
<span class="t" style="left:1175.10px;top:126px;font-size:11px;color:#5c5c5c;transform:scaleX(0.9442);">DOCUMENTATION</span>
<span class="t" style="left:30.50px;top:176px;font-size:11px;color:#9a9a9a;transform:scaleX(1.0549);">Index</span>
<span class="t" style="left:191.10px;top:176px;font-size:11px;color:#9a9a9a;letter-spacing:-0.144px;">Summary</span>
<span class="t" style="left:40.50px;top:198px;font-size:11px;color:#3a3a3a;letter-spacing:-0.095px;">LaneMarkerDetectorTestRequirements</span>
<span class="t" style="left:60.20px;top:221px;font-size:11px;color:#3a3a3a;">1</span>
<span class="t" style="left:89.90px;top:221px;font-size:11px;color:#3a3a3a;letter-spacing:-0.181px;">scenario_LF_01_Straight_RightLane</span>
<span class="t" style="left:60.20px;top:244px;font-size:11px;color:#3a3a3a;">2</span>
<span class="t" style="left:89.90px;top:244px;font-size:11px;color:#3a3a3a;letter-spacing:-0.163px;">scenario_LF_02_Straight_LeftLane</span>
<span class="t" style="left:60.20px;top:267px;font-size:11px;color:#3a3a3a;">3</span>
<span class="t" style="left:89.90px;top:267px;font-size:11px;color:#3a3a3a;letter-spacing:-0.231px;">scenario_LF_03_Curve_LeftLane</span>
<span class="t" style="left:60.20px;top:290px;font-size:11px;color:#3a3a3a;">4</span>
<span class="t" style="left:89.90px;top:290px;font-size:11px;color:#3a3a3a;letter-spacing:-0.249px;">scenario_LF_04_Curve_RightLane</span>
<span class="t" style="left:60.20px;top:313px;font-size:11px;color:#3a3a3a;">5</span>
<span class="t" style="left:89.90px;top:313px;font-size:11px;color:#3a3a3a;letter-spacing:-0.194px;">scenario_LD_01_Curve_ThreeVehicles</span>
<span class="t" style="left:60.20px;top:336px;font-size:11px;color:#3a3a3a;">6</span>
<span class="t" style="left:89.90px;top:336px;font-size:11px;color:#3a3a3a;letter-spacing:-0.244px;">scenario_LD_02_Curve_SixVehicles</span>
<span class="t" style="left:375.50px;top:149px;font-size:11px;color:#141414;letter-spacing:0.177px;">Requirement: #2</span>
<span class="t" style="left:376.90px;top:175px;font-size:11px;color:#141414;letter-spacing:-0.104px;">Details</span>
<span class="t" style="left:386.90px;top:202px;font-size:12.4px;color:#000;font-weight:700;letter-spacing:0.123px;">Properties</span>
<span class="t" style="left:374.70px;top:229px;font-size:11px;color:#141414;letter-spacing:0.273px;">Type:</span>
<span class="t" style="left:375.10px;top:252px;font-size:11px;color:#141414;letter-spacing:0.246px;">Index:</span>
<span class="t" style="left:374.50px;top:274px;font-size:11px;color:#141414;letter-spacing:0.043px;">Custom ID:</span>
<span class="t" style="left:374.50px;top:300px;font-size:11px;color:#141414;letter-spacing:0.011px;">Summary:</span>
<span class="t" style="left:442.70px;top:230px;font-size:11px;color:#141414;letter-spacing:-0.085px;">Functional</span>
<span class="t" style="left:436.80px;top:252px;font-size:11px;color:#141414;">6</span>
<span class="t" style="left:442.90px;top:275px;font-size:11px;color:#8c8c8c;transform:scaleX(1.1755);">#2</span>
<span class="t" style="left:442.50px;top:301px;font-size:11px;color:#141414;letter-spacing:-0.231px;">scenario_LD_02_Curve_SixVehicles</span>
<span class="t" style="left:384.70px;top:330px;font-size:11px;color:#141414;letter-spacing:-0.083px;">Description</span>
<span class="t" style="left:462.70px;top:330px;font-size:11px;color:#141414;letter-spacing:-0.161px;">Rationale</span>
<span class="t" style="left:393.10px;top:413px;font-size:18.8px;color:#fff;font-weight:700;transform:scaleX(0.9659);">Test Description</span>
<span class="t" style="left:702.70px;top:413px;font-size:18.8px;color:#fff;font-weight:700;letter-spacing:-0.230px;">Test Requirements</span>
<span class="t" style="left:393.10px;top:436px;font-size:13.9px;color:#111;font-weight:700;letter-spacing:0.023px;">Test lane marker detector on a curved road</span>
<span class="t" style="left:393.10px;top:455px;font-size:13.9px;color:#111;font-weight:700;letter-spacing:0.015px;">when one or more vehicles obstruct the ego</span>
<span class="t" style="left:393.10px;top:474px;font-size:13.9px;color:#111;font-weight:700;letter-spacing:-0.125px;">vehicle’s lane</span>
<span class="t" style="left:445.70px;top:646px;font-size:14.7px;color:#2b2b2b;letter-spacing:-0.062px;">Test lane marker detector on a</span>
<span class="t" style="left:440.70px;top:665px;font-size:14.7px;color:#2b2b2b;">curved road scenario with ego vehicle</span>
<span class="t" style="left:440.70px;top:684px;font-size:14.7px;color:#2b2b2b;letter-spacing:0.128px;">in the left lane.</span>
<span class="t" style="left:445.70px;top:704px;font-size:14.7px;color:#2b2b2b;letter-spacing:-0.095px;">Five target vehicles are present in</span>
<span class="t" style="left:440.70px;top:723px;font-size:14.7px;color:#2b2b2b;letter-spacing:0.041px;">the scenario.</span>
<span class="t" style="left:445.70px;top:743px;font-size:14.7px;color:#2b2b2b;letter-spacing:0.006px;">Lead vehicle slows down in front of</span>
<span class="t" style="left:440.70px;top:762px;font-size:14.7px;color:#2b2b2b;">ego vehicle while other vehicles</span>
<span class="t" style="left:440.70px;top:781px;font-size:14.7px;color:#2b2b2b;letter-spacing:-0.030px;">travels in the adjacent lanes.</span>
<span class="t" style="left:445.70px;top:801px;font-size:14.7px;color:#2b2b2b;letter-spacing:0.029px;">Initial Velocities are set to 20.6m/s.</span>
<span class="t" style="left:755.70px;top:437px;font-size:14.7px;color:#2b2b2b;letter-spacing:0.095px;">Deviation between the detected left lane</span>
<span class="t" style="left:750.70px;top:456px;font-size:14.7px;color:#2b2b2b;letter-spacing:0.025px;">marking and the corresponding ground</span>
<span class="t" style="left:750.70px;top:475px;font-size:14.7px;color:#2b2b2b;letter-spacing:0.056px;">truth must be less than 0.25m.</span>
<span class="t" style="left:755.70px;top:495px;font-size:14.7px;color:#2b2b2b;letter-spacing:0.098px;">Deviation between the detected right lane</span>
<span class="t" style="left:750.70px;top:514px;font-size:14.7px;color:#2b2b2b;letter-spacing:0.025px;">marking and the corresponding ground</span>
<span class="t" style="left:750.70px;top:533px;font-size:14.7px;color:#2b2b2b;letter-spacing:0.056px;">truth must be less than 0.25m.</span>
</body></html>
